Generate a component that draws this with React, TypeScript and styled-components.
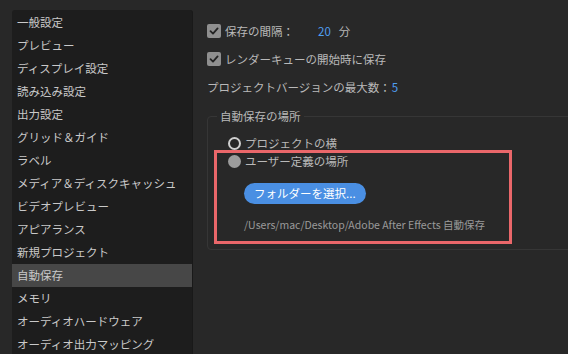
import React from 'react';
import styled, { createGlobalStyle } from 'styled-components';

const GlobalStyle = createGlobalStyle`
    html, body {
        margin: 0;
        padding: 0;
        background: #282828;
        overflow: hidden;
    }
    body {
        font-family: "Noto Sans CJK JP", "Noto Sans", sans-serif;
        font-size: 11.5px;
    }
`;

const Page = styled.div`
    display: flex;
    flex-direction: row;
    width: 568px;
    height: 354px;
    overflow: hidden;
`;

// Left list of preference categories
const Sidebar = styled.ul`
    list-style: none;
    margin: 10px 0 0 12px;
    padding: 1px 0 0;
    width: 180px;
    flex-shrink: 0;
    background: #1d1d1d;
    border-right: 1px solid #191919;
    border-radius: 3px 3px 0 0;
`;

const SidebarItem = styled.li<{ $active?: boolean }>`
    height: 23px;
    line-height: 23px;
    padding-left: 5px;
    color: #c9c9c9;
    white-space: nowrap;
    background: ${p => (p.$active ? '#474747' : 'transparent')};
`;

const Main = styled.div`
    display: flex;
    flex-direction: column;
    padding: 20px 0 0 14px;
    flex: 1;
    min-width: 0;
`;

const Row = styled.div<{ $gap?: number }>`
    display: flex;
    align-items: center;
    height: 22px;
    margin-bottom: 6px;
    color: #b9b9b9;
    white-space: nowrap;
    gap: ${p => p.$gap ?? 4}px;
`;

const Box = styled.span`
    width: 14px;
    height: 14px;
    border-radius: 2px;
    background: #8f8f8f;
    display: flex;
    align-items: center;
    justify-content: center;
    flex-shrink: 0;
`;

const Label = styled.span<{ $width?: number }>`
    display: inline-block;
    ${p => (p.$width ? `width: ${p.$width}px;` : '')}
`;

const Value = styled.span`
    color: #4f9ef0;
    margin-right: 4px;
`;

const Group = styled.fieldset`
    margin: 4px -20px 0 0;
    padding: 0 0 5px 6px;
    border: 1px solid #363636;
    border-radius: 4px;
    min-width: 0;
`;

const Legend = styled.legend`
    margin-left: 3px;
    padding: 0 3px;
    line-height: 16px;
    color: #b9b9b9;
`;

const RadioRow = styled.div<{ $top: number }>`
    display: flex;
    align-items: center;
    gap: 4px;
    height: 14px;
    margin-top: ${p => p.$top}px;
    padding-left: 14px;
    color: #b9b9b9;
    white-space: nowrap;
`;

const Radio = styled.span<{ $checked?: boolean }>`
    box-sizing: border-box;
    width: 13px;
    height: 13px;
    border-radius: 50%;
    flex-shrink: 0;
    ${p =>
        p.$checked
            ? 'background: #9c9c9c;'
            : 'border: 2px solid #cfcfcf; background: transparent;'}
`;

// Red annotation frame around the custom location block
const Highlight = styled.div`
    width: 298px;
    box-sizing: border-box;
    border: 3px solid #ea676a;
    padding: 0 0 9px;
    display: flex;
    flex-direction: column;
    align-items: flex-start;
    & > ${RadioRow} {
        padding-left: 11px;
    }
`;

const Button = styled.button`
    margin: 15px 0 0 27px;
    box-sizing: border-box;
    min-width: 106px;
    height: 21px;
    padding: 0 10px;
    border: none;
    border-radius: 11px;
    background: #4a8fe3;
    color: #fff;
    font-family: inherit;
    font-size: 11.5px;
    line-height: 21px;
    text-align: center;
`;

const Path = styled.div`
    margin: 14px 0 0 27px;
    line-height: 14px;
    color: #9a9a9a;
    font-size: 10.5px;
    white-space: nowrap;
`;

const Check = () => (
    <Box>
        <svg width="10" height="10" viewBox="0 0 10 10">
            <path d="M1.5 5.2 L4 7.6 L8.6 2.4" fill="none" stroke="#232323" strokeWidth="1.8" strokeLinecap="round" strokeLinejoin="round" />
        </svg>
    </Box>
);

const categories = [
    '一般設定',
    'プレビュー',
    'ディスプレイ設定',
    '読み込み設定',
    '出力設定',
    'グリッド＆ガイド',
    'ラベル',
    'メディア＆ディスクキャッシュ',
    'ビデオプレビュー',
    'アピアランス',
    '新規プロジェクト',
    '自動保存',
    'メモリ',
    'オーディオハードウェア',
    'オーディオ出力マッピング',
];

const App = () => {
    return (
        <>
            <GlobalStyle />
            <Page>
                <Sidebar>
                    {categories.map(c => (
                        <SidebarItem key={c} $active={c === '自動保存'}>{c}</SidebarItem>
                    ))}
                </Sidebar>
                <Main>
                    <Row>
                        <Check />
                        <Label $width={89}>保存の間隔：</Label>
                        <Value>20</Value>
                        <span>分</span>
                    </Row>
                    <Row>
                        <Check />
                        <Label>レンダーキューの開始時に保存</Label>
                    </Row>
                    <Row $gap={1}>
                        <Label>プロジェクトバージョンの最大数：</Label>
                        <Value>5</Value>
                    </Row>
                    <Group>
                        <Legend>自動保存の場所</Legend>
                        <RadioRow $top={12}>
                            <Radio />
                            <span>プロジェクトの横</span>
                        </RadioRow>
                        <Highlight>
                            <RadioRow $top={1}>
                                <Radio $checked />
                                <span>ユーザー定義の場所</span>
                            </RadioRow>
                            <Button>フォルダーを選択...</Button>
                            <Path>/Users/mac/Desktop/Adobe After Effects 自動保存</Path>
                        </Highlight>
                    </Group>
                </Main>
            </Page>
        </>
    );
};

export default App;
